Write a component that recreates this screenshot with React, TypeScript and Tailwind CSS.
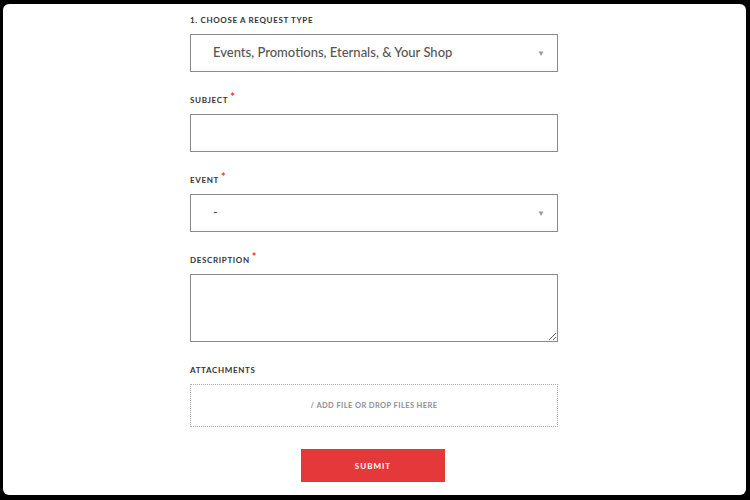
import { useState } from "react";

function Label({ text, required }: { text: string; required?: boolean }) {
  return (
    <div className="mb-[8px] flex h-[12px] items-center text-[8px] font-bold uppercase leading-[12px] tracking-[0.65px] text-[#333]">
      <span>{text}</span>
      {required && (
        <span className="relative -top-[4px] ml-[2px] text-[11px] leading-none text-[#e5383b]">*</span>
      )}
    </div>
  );
}

function Select({ value }: { value: string }) {
  return (
    <div className="flex h-[38px] w-full items-center justify-between border border-[#8a8a8a] bg-white pl-[22px] pr-[12px]">
      <span className="text-[13px] font-medium text-[#555]">{value}</span>
      <span className="text-[8px] text-[#9a9a9a]">▼</span>
    </div>
  );
}

export default function App() {
  const [subject, setSubject] = useState("");
  const [description, setDescription] = useState("");

  return (
    <div className="h-[500px] w-[750px] bg-black pb-[5px] pl-[3px] pr-[4px] pt-[4px] font-['Lato',sans-serif]">
      <div className="h-full w-full rounded-[6px] bg-white pt-[10px]">
        <form className="ml-[187px] flex w-[368px] flex-col" onSubmit={(e) => e.preventDefault()}>
          <Label text="1. Choose a request type" />
          <Select value="Events, Promotions, Eternals, & Your Shop" />

          <div className="mt-[22px]">
            <Label text="Subject" required />
            <input
              value={subject}
              onChange={(e) => setSubject(e.target.value)}
              className="block h-[38px] w-full border border-[#8a8a8a] bg-white px-3 text-[13px] outline-none"
            />
          </div>

          <div className="mt-[22px]">
            <Label text="Event" required />
            <Select value="-" />
          </div>

          <div className="mt-[22px]">
            <Label text="Description" required />
            <textarea
              value={description}
              onChange={(e) => setDescription(e.target.value)}
              className="block h-[68px] w-full border border-[#8a8a8a] bg-white px-3 py-2 text-[13px] outline-none"
            />
          </div>

          <div className="mt-[22px]">
            <Label text="Attachments" />
            <div className="flex h-[43px] w-full items-center justify-center border border-dotted border-[#aaa] text-[7.5px] font-bold uppercase tracking-[0.4px] text-[#8a8f98]">
              / Add file or drop files here
            </div>
          </div>

          <button
            type="submit"
            className="ml-[111px] mt-[22px] h-[33px] w-[144px] bg-[#e5383b] text-[8px] font-bold uppercase tracking-[1px] text-white"
          >
            Submit
          </button>
        </form>
      </div>
    </div>
  );
}
